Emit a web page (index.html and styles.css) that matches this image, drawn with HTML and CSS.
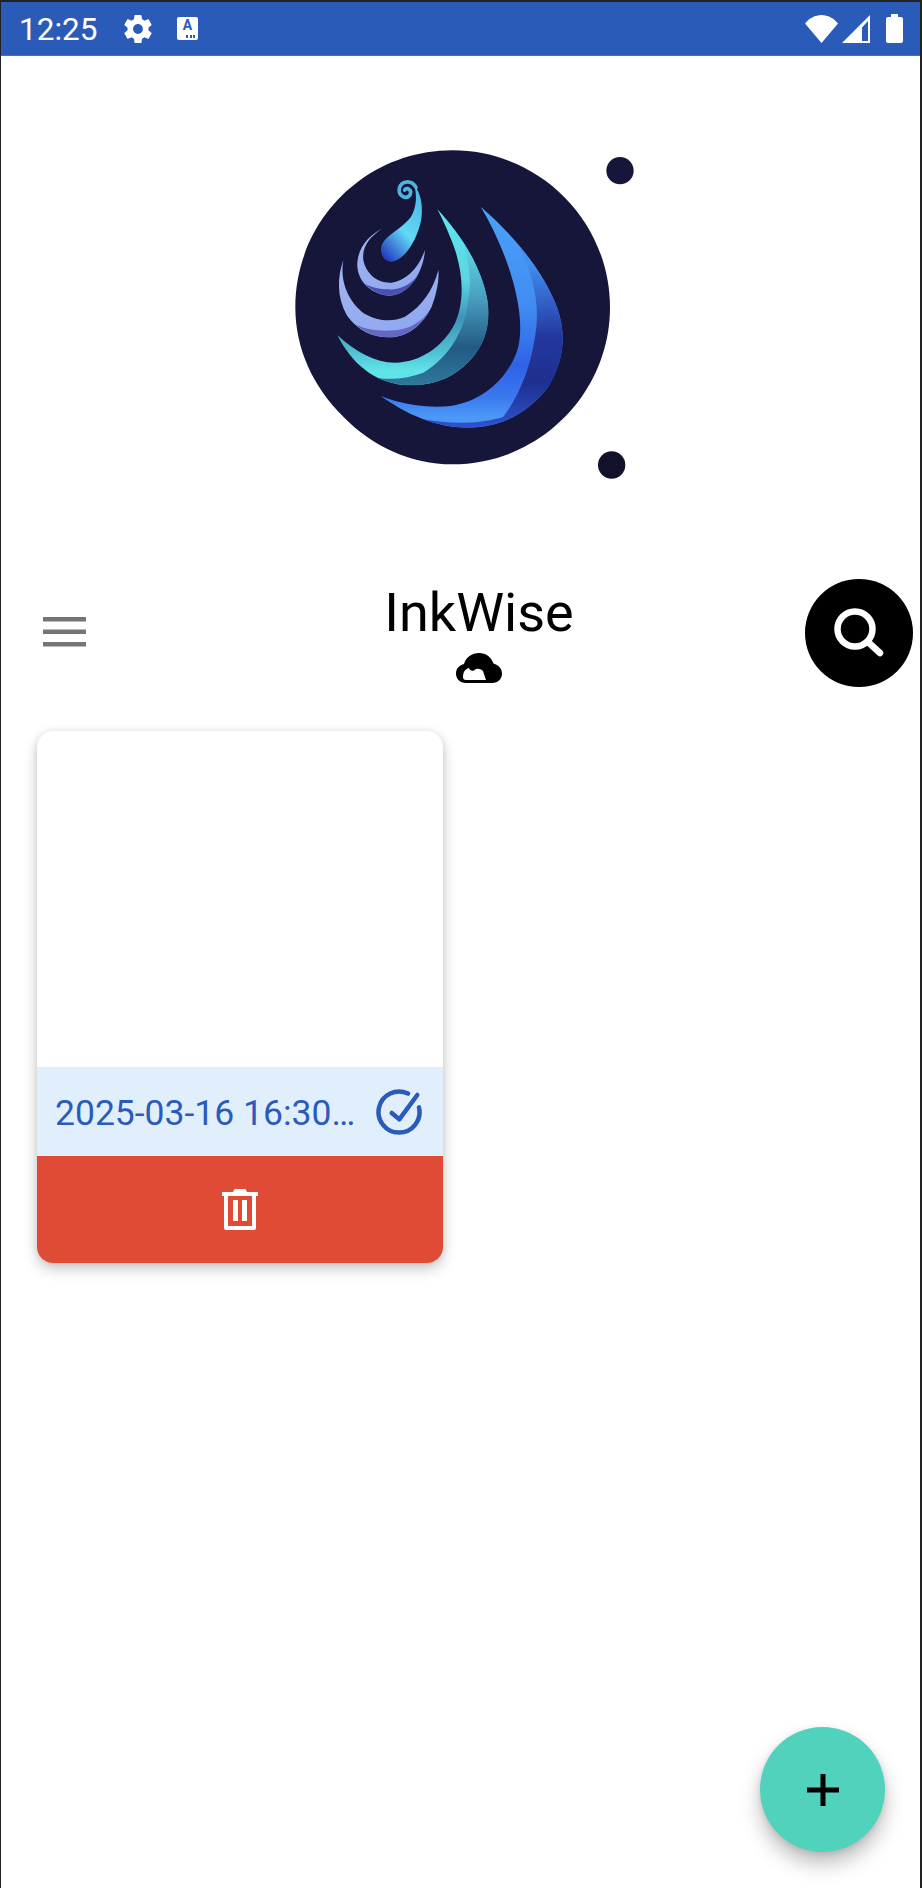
FILE: index.html
```html
<!DOCTYPE html>
<html lang="en">
<head>
<meta charset="utf-8">
<title>InkWise</title>
<link rel="stylesheet" href="styles.css">
</head>
<body>
<div class="frame">
  <div class="status">
    <div class="status-left">
      <span class="clock">12:25</span>
      <svg class="gear" viewBox="2 2 20 20"><path fill="#fff" d="M19.43 12.98c.04-.32.07-.64.07-.98s-.03-.66-.07-.98l2.11-1.65c.19-.15.24-.42.12-.64l-2-3.46c-.12-.22-.39-.3-.61-.22l-2.49 1c-.52-.4-1.08-.73-1.69-.98l-.38-2.65C14.46 2.18 14.25 2 14 2h-4c-.25 0-.46.18-.49.42l-.38 2.65c-.61.25-1.17.59-1.69.98l-2.49-1c-.23-.09-.49 0-.61.22l-2 3.46c-.13.22-.07.49.12.64l2.11 1.65c-.04.32-.07.65-.07.98s.03.66.07.98l-2.11 1.65c-.19.15-.24.42-.12.64l2 3.46c.12.22.39.3.61.22l2.49-1c.52.4 1.08.73 1.69.98l.38 2.65c.03.24.24.42.49.42h4c.25 0 .46-.18.49-.42l.38-2.65c.61-.25 1.17-.59 1.69-.98l2.49 1c.23.09.49 0 .61-.22l2-3.46c.12-.22.07-.49-.12-.64l-2.11-1.65zM12 15.5c-1.93 0-3.5-1.57-3.5-3.5s1.57-3.5 3.5-3.5 3.5 1.57 3.5 3.5-1.57 3.5-3.5 3.5z"/></svg>
      <span class="a-badge"><span class="a-letter">A</span><span class="a-dots"></span></span>
    </div>
    <div class="status-right">
      <svg class="wifi" viewBox="0 0 33 28"><path fill="#fff" d="M16.5 28 0 8.5C4 3.5 10 0 16.5 0S29 3.5 33 8.5z"/></svg>
      <svg class="signal" viewBox="0 0 28 28"><path fill="#fff" fill-rule="evenodd" d="M28 0V28H0zM26 6 20 12.500V26H26z"/></svg>
      <svg class="battery" viewBox="0 0 17 29"><path fill="#fff" d="M5 0h7v3h3a2 2 0 0 1 2 2v22a2 2 0 0 1-2 2H2a2 2 0 0 1-2-2V5a2 2 0 0 1 2-2h3z"/></svg>
    </div>
  </div>

  <div class="logo-wrap">
    <svg class="logo" viewBox="0 0 1110 1080">
      <defs>
        <linearGradient id="gBlue" gradientUnits="userSpaceOnUse" x1="0" y1="230" x2="0" y2="893">
          <stop offset="0" stop-color="#4aa3f7"/>
          <stop offset="0.45" stop-color="#418cf2"/>
          <stop offset="0.72" stop-color="#2f62e6"/>
          <stop offset="0.86" stop-color="#3a78ee"/>
          <stop offset="0.95" stop-color="#4c98f6"/>
        </linearGradient>
        <linearGradient id="gBlueDark" gradientUnits="userSpaceOnUse" x1="0" y1="400" x2="0" y2="893">
          <stop offset="0" stop-color="#418ff2"/>
          <stop offset="0.45" stop-color="#23379f"/>
          <stop offset="0.72" stop-color="#1e2f8f"/>
          <stop offset="1" stop-color="#2f52cf"/>
        </linearGradient>
        <linearGradient id="gTeal" gradientUnits="userSpaceOnUse" x1="0" y1="238" x2="0" y2="765">
          <stop offset="0" stop-color="#5fe6ee"/>
          <stop offset="0.4" stop-color="#5bd6e2"/>
          <stop offset="0.62" stop-color="#3f93bb"/>
          <stop offset="0.8" stop-color="#4fbcd0"/>
          <stop offset="0.92" stop-color="#60e4e8"/>
        </linearGradient>
        <linearGradient id="gTealDark" gradientUnits="userSpaceOnUse" x1="0" y1="350" x2="0" y2="770">
          <stop offset="0" stop-color="#5fd8e4"/>
          <stop offset="0.36" stop-color="#4a9fc0"/>
          <stop offset="0.72" stop-color="#235a85"/>
          <stop offset="1" stop-color="#2f7a9c"/>
        </linearGradient>
        <linearGradient id="gPurple" x1="0" y1="0" x2="0.6" y2="1">
          <stop offset="0" stop-color="#a3b4f2"/>
          <stop offset="1" stop-color="#8fa8f0"/>
        </linearGradient>
        <linearGradient id="gDrop" x1="0.8" y1="0" x2="0.2" y2="1">
          <stop offset="0" stop-color="#4bb8e8"/>
          <stop offset="0.55" stop-color="#62d8f6"/>
          <stop offset="1" stop-color="#2440c0"/>
        </linearGradient>
        <clipPath id="clipBlue"><path d="M602 230C690 305 790 420 832 535C860 615 852 690 805 770C745 850 660 893 565 893C465 893 375 850 302 798C370 825 450 835 510 828C610 815 690 740 715 650C740 540 680 360 602 230Z"/></clipPath>
        <clipPath id="clipTeal"><path d="M472 238C540 310 605 410 622 510C635 590 610 660 550 710C500 755 430 770 370 765C280 755 215 700 172 615C225 665 285 698 345 698C420 698 490 650 525 580C560 500 545 400 510 320C498 290 485 262 472 238Z"/></clipPath>
      </defs>
      <path fill="#15163a" d="M517 61C777 61 990 272 990 532C990 792 777 1003 517 1003C392 1003 275 948 190 860C100 772 46 657 46 532C46 272 257 61 517 61Z"/>
      <circle cx="1020" cy="122" r="41" fill="#15163a"/>
      <circle cx="995" cy="1005" r="41" fill="#11122a"/>

      <g clip-path="url(#clipBlue)">
        <rect x="280" y="200" width="600" height="720" fill="url(#gBlue)"/>
        <path fill="url(#gBlueDark)" d="M640 230C730 350 790 480 765 620C750 720 715 800 670 860C610 880 520 885 430 868L430 950H950V230Z"/>
      </g>

      <g clip-path="url(#clipTeal)">
        <rect x="150" y="220" width="500" height="570" fill="url(#gTeal)"/>
        <path fill="url(#gTealDark)" d="M480 200C560 330 580 430 565 510C555 600 510 680 430 728C385 745 335 752 280 742L290 800H700V200Z"/>
      </g>

      <path fill="url(#gPurple)" d="M190 390C172 440 170 500 200 555C235 605 280 622 330 622C390 620 430 580 455 530C470 490 478 450 475 420C460 480 425 530 375 560C330 580 280 570 245 545C200 505 180 450 190 390Z"/>
      <path fill="#6468c2" d="M225 583C255 610 290 622 330 622C385 620 425 585 450 540C425 575 390 597 345 601C300 605 260 600 225 583Z"/>
      <path fill="url(#gPurple)" d="M308 295C260 320 230 360 232 410C236 460 280 495 330 497C385 495 430 430 435 360C415 415 380 450 335 458C290 460 258 430 250 390C245 350 270 320 308 295Z"/>
      <path fill="#4d50b0" d="M255 462C280 487 305 497 330 497C365 495 395 470 415 435C390 465 360 480 325 478C300 478 275 472 255 462Z"/>

      <path fill="url(#gDrop)" d="M402 165C425 190 432 240 420 285C405 340 370 392 335 395C310 395 298 370 305 345C318 315 360 300 390 265C410 235 412 195 402 165Z"/>
      <path fill="none" stroke="#4fb4dc" stroke-width="11" stroke-linecap="round" d="M408 172C395 150 365 150 358 175C354 198 378 210 390 195C397 180 382 170 374 180"/>
    </svg>
  </div>

  <div class="toolbar">
    <svg class="menu" viewBox="0 0 43 30"><path fill="#757575" d="M0 0h43v4.500H0zM0 12.500h43V17H0zM0 25h43v4.500H0z"/></svg>
    <div class="title-block">
      <h1 class="title">InkWise</h1>
      <svg class="cloud" viewBox="0 0 46 30"><path d="M10 30C4 30 0 26 0 20.500C0 15.500 3.500 12 8 11C10 4 16 0 23 0C30 0 35 4 37.500 10.500C42.500 12 46 15.500 46 20.500C46 26 42 30 36 30Z"/><path fill="#fff" d="M7 24C7 19 9 16 13 15C14 18 17 19 20 16C23 15 26 17 27 18L30 27H10Q7 27 7 24Z"/></svg>
    </div>
    <button class="search-btn" type="button" aria-label="Search">
      <svg class="search-icon" viewBox="0 0 50 50"><circle cx="21" cy="21" r="17.500" fill="none" stroke="#fff" stroke-width="6.500"/><path fill="none" stroke="#fff" stroke-width="6.500" stroke-linecap="round" d="M34 34 46 45"/></svg>
    </button>
  </div>

  <div class="notes">
    <article class="card">
      <div class="card-preview"></div>
      <div class="card-meta">
        <span class="card-date">2025-03-16 16:30…</span>
        <svg class="check" viewBox="0 0 48 48"><path fill="none" stroke="#2b5bb8" stroke-width="4.500" stroke-linecap="round" d="M33 5.600A20.500 20.500 0 1 0 44 19.400"/><path fill="none" stroke="#2b5bb8" stroke-width="4.500" stroke-linecap="round" stroke-linejoin="round" d="M16.700 25 24.300 31.300 42.300 7"/></svg>
      </div>
      <div class="card-delete">
        <svg class="trash" viewBox="0 0 36 41"><path fill="#fff" d="M11 3 12.500 0h11L25 3h11v4H0V3z"/><path fill="none" stroke="#fff" stroke-width="4" stroke-linejoin="round" d="M4 6V39H32V6"/><path fill="#fff" d="M11 11h5v21h-5zM20 11h5v21h-5z"/></svg>
      </div>
    </article>
  </div>

  <button class="fab" type="button" aria-label="Add">
    <svg class="plus" viewBox="0 0 32 32"><path fill="#000" d="M13.500 0h5v13.500H32v5H18.500V32h-5V18.500H0v-5h13.500z"/></svg>
  </button>
</div>
</body>
</html>
```

FILE: styles.css
```css
* { box-sizing: border-box; }
html, body { margin: 0; padding: 0; background: #fff; width: 922px; height: 1888px; overflow: hidden; }
body { font-family: Roboto, "Liberation Sans", sans-serif; }

.frame {
  position: relative;
  width: 922px;
  height: 1888px;
  overflow: hidden;
  border-top: 2px solid #222;
  border-left: 1px solid #222;
  border-right: 2px solid #222;
  background: #fff;
  display: flex;
  flex-direction: column;
}

.status {
  height: 54px;
  background: #2b5bb8;
  border-bottom: 1px solid #3f6fcc;
  display: flex;
  align-items: center;
  justify-content: space-between;
  padding: 0 17px 0 18px;
  color: #fff;
  flex: none;
}
.status-left, .status-right { display: flex; align-items: center; }
.clock { font-size: 31.5px; line-height: 36px; width: 105px; padding-top: 2px; }
.gear { width: 28px; height: 28px; margin-right: 25px; }
.a-badge {
  position: relative;
  width: 21px;
  height: 23px;
  background: #fff;
  border-radius: 2px;
  display: flex;
  justify-content: center;
}
.a-letter { font-size: 14px; line-height: 16px; font-weight: 700; color: #2b5bb8; }
.a-dots { position: absolute; right: 3px; bottom: 2px; width: 9px; height: 3px; background: repeating-linear-gradient(90deg, #2b5bb8 0 2px, transparent 2px 3.500px); }
.wifi { width: 33px; height: 28px; margin-right: 4px; }
.signal { width: 28px; height: 28px; margin-right: 16px; }
.battery { width: 17px; height: 29px; }

.logo-wrap { height: 523px; padding: 74px 0 0 279px; flex: none; }
.logo { display: block; width: 370px; height: 360px; }

.toolbar {
  height: 108px;
  display: grid;
  grid-template-columns: 1fr auto 1fr;
  padding: 0 7px 0 41px;
  flex: none;
}
.menu { width: 43px; height: 30px; align-self: center; margin: 0 0 2px 1px; }
.title-block { display: flex; flex-direction: column; align-items: center; padding-left: 3px; }
.title { margin: 0; font-size: 54px; line-height: 67px; font-weight: 400; color: #000; }
.cloud { width: 46px; height: 30px; margin-top: 7px; }
.search-btn {
  justify-self: end;
  width: 108px;
  height: 108px;
  border: 0;
  padding: 0;
  border-radius: 50%;
  background: #000;
  display: flex;
  align-items: center;
  justify-content: center;
}
.search-icon { width: 50px; height: 50px; }

.notes { padding: 44px 0 0 36px; flex: none; }
.card {
  width: 406px;
  border-radius: 16px;
  overflow: hidden;
  background: #fff;
  box-shadow: 0 6px 14px rgba(0, 0, 0, .22), 0 0 6px rgba(0, 0, 0, .08);
}
.card-preview { height: 336px; }
.card-meta {
  height: 89px;
  background: #e1effd;
  display: flex;
  align-items: center;
  justify-content: space-between;
  padding: 0 20px 0 18px;
}
.card-date {
  font-size: 35.5px;
  line-height: 42px;
  padding-top: 2px;
  color: #2b5bb8;
  white-space: nowrap;
}
.check { width: 48px; height: 48px; flex: none; }
.card-delete {
  height: 107px;
  background: #e04b36;
  display: flex;
  align-items: center;
  justify-content: center;
}
.trash { width: 36px; height: 41px; }

.fab {
  position: absolute;
  right: 35px;
  bottom: 36px;
  width: 125px;
  height: 125px;
  border: 0;
  padding: 0;
  border-radius: 50%;
  background: #50d2bd;
  box-shadow: 0 12px 20px rgba(0, 0, 0, .25), 0 2px 6px rgba(0, 0, 0, .1);
  display: flex;
  align-items: center;
  justify-content: center;
}
.plus { width: 32px; height: 32px; }
```
